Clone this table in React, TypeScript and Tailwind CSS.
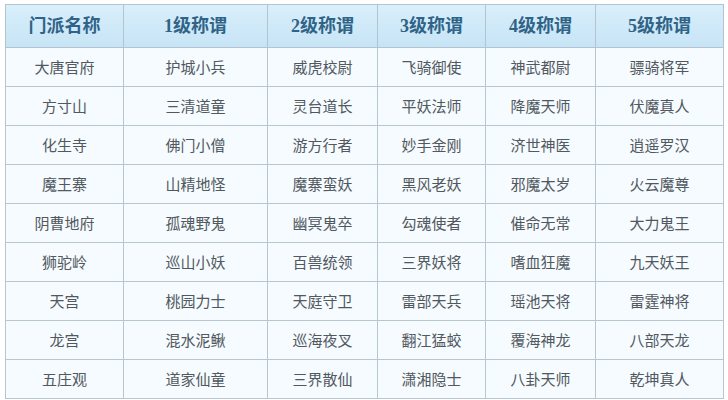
const headers = ["门派名称", "1级称谓", "2级称谓", "3级称谓", "4级称谓", "5级称谓"];

const rows = [
  ["大唐官府", "护城小兵", "威虎校尉", "飞骑御使", "神武都尉", "骠骑将军"],
  ["方寸山", "三清道童", "灵台道长", "平妖法师", "降魔天师", "伏魔真人"],
  ["化生寺", "佛门小僧", "游方行者", "妙手金刚", "济世神医", "逍遥罗汉"],
  ["魔王寨", "山精地怪", "魔寨蛮妖", "黑风老妖", "邪魔太岁", "火云魔尊"],
  ["阴曹地府", "孤魂野鬼", "幽冥鬼卒", "勾魂使者", "催命无常", "大力鬼王"],
  ["狮驼岭", "巡山小妖", "百兽统领", "三界妖将", "嗜血狂魔", "九天妖王"],
  ["天宫", "桃园力士", "天庭守卫", "雷部天兵", "瑶池天将", "雷霆神将"],
  ["龙宫", "混水泥鳅", "巡海夜叉", "翻江猛蛟", "覆海神龙", "八部天龙"],
  ["五庄观", "道家仙童", "三界散仙", "潇湘隐士", "八卦天师", "乾坤真人"],
];

const widths = ["w-[118px]", "w-[144px]", "w-[110px]", "w-[108px]", "w-[110px]", "w-[128px]"];

export default function App() {
  return (
    <div className="w-[728px] h-[400px] bg-white pt-[4px] pl-[5px]">
      <table className="table-fixed border-collapse w-[719px] border border-[#a9b9c6]">
        <colgroup>
          {widths.map((w, i) => (
            <col key={i} className={w} />
          ))}
        </colgroup>
        <thead>
          <tr className="h-[43px] bg-gradient-to-b from-[#d9effb] to-[#c6e4f6]">
            {headers.map((h) => (
              <th
                key={h}
                className="border border-[#b3c4d0] text-center font-bold text-[18px] text-[#2f6488] font-['Liberation_Serif','Noto_Sans_CJK_SC',serif]"
              >
                {h}
              </th>
            ))}
          </tr>
        </thead>
        <tbody>
          {rows.map((r) => (
            <tr key={r[0]} className="h-[39px] bg-[#f5fbfe]">
              {r.map((c, i) => (
                <td
                  key={i}
                  className="border border-[#b8c6d0] text-center text-[15px] text-[#51585e] font-['Noto_Sans_CJK_SC',sans-serif]"
                >
                  {c}
                </td>
              ))}
            </tr>
          ))}
        </tbody>
      </table>
    </div>
  );
}
